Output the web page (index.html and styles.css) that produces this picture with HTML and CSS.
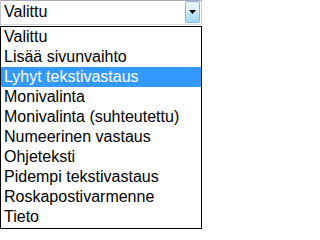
FILE: index.html
```html
<!DOCTYPE html>
<html lang="fi">
<head>
<meta charset="utf-8">
<title>Valitse</title>
<link rel="stylesheet" href="styles.css">
</head>
<body>
<div class="combo">
  <div class="combo-field">
    <span class="combo-value">Valittu</span>
    <span class="combo-btn"><svg width="7" height="4" viewBox="0 0 7 4"><path d="M0 0H7L3.5 4Z" fill="#000"/></svg></span>
  </div>
  <ul class="options">
    <li>Valittu</li>
    <li>Lisää sivunvaihto</li>
    <li class="selected">Lyhyt tekstivastaus</li>
    <li>Monivalinta</li>
    <li>Monivalinta (suhteutettu)</li>
    <li>Numeerinen vastaus</li>
    <li>Ohjeteksti</li>
    <li>Pidempi tekstivastaus</li>
    <li>Roskapostivarmenne</li>
    <li>Tieto</li>
  </ul>
</div>
</body>
</html>
```
FILE: styles.css
```css
body {
  margin: 0;
  background: #fff;
  font-family: "Liberation Sans", Arial, sans-serif;
  font-size: 16px;
  color: #000;
}
.combo {
  width: 202px;
}
.combo-field {
  display: flex;
  height: 25px;
  box-sizing: border-box;
  border: 1px solid #abadb3;
  border-color: #abadb3 #c9ccd2 #d5d8de #c2c5cc;
  padding: 0 1px 1px 0;
}
.combo-value {
  flex: 1;
  padding-left: 3px;
  line-height: 22px;
}
.combo-btn {
  width: 15px;
  box-sizing: border-box;
  border: 1px solid #7eb4ea;
  border-radius: 2px;
  background: linear-gradient(#eaf6fd, #d9f0fc 45%, #bee6fd 55%, #a7d9f5);
  display: flex;
  align-items: center;
  justify-content: center;
}
.options {
  list-style: none;
  margin: 1px 0 0;
  padding: 0 0 1px;
  border: 1px solid #000;
}
.options li {
  height: 20px;
  line-height: 20px;
  padding-left: 3px;
  white-space: nowrap;
}
.options li.selected {
  background: #3399ff;
  color: #fff;
}
```
